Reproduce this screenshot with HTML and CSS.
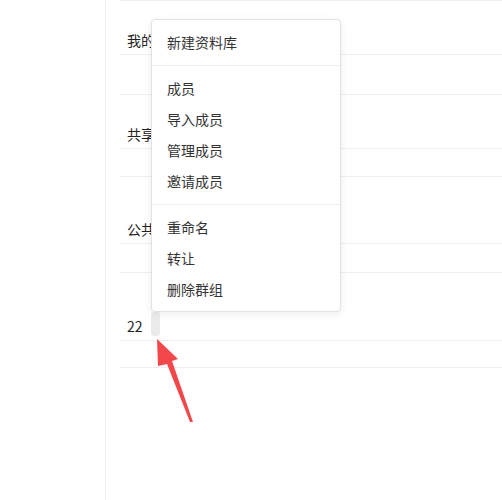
FILE: index.html
```html
<!DOCTYPE html>
<html lang="zh-CN">
<head>
    <meta charset="UTF-8">
    <title>资料库</title>
    <link rel="stylesheet" href="styles.css">
</head>
<body>
    <div class="layout">
        <div class="sidebar"></div>
        <div class="main">
            <div class="row group h54">我的资料库</div>
            <div class="row h40"></div>
            <div class="row group h54">共享资料库</div>
            <div class="row h28"></div>
            <div class="row group h67">公共资料库</div>
            <div class="row h29"></div>
            <div class="row group h68">
                <span>22</span>
                <span class="moreBtn"></span>
            </div>
            <div class="row h28 last"></div>
        </div>
    </div>

    <div class="menu">
        <div class="menuItem">新建资料库</div>
        <div class="menuDivider"></div>
        <div class="menuItem">成员</div>
        <div class="menuItem">导入成员</div>
        <div class="menuItem">管理成员</div>
        <div class="menuItem">邀请成员</div>
        <div class="menuDivider"></div>
        <div class="menuItem">重命名</div>
        <div class="menuItem">转让</div>
        <div class="menuItem">删除群组</div>
    </div>

    <svg class="arrow" width="502" height="500" viewBox="0 0 502 500">
        <polygon points="157,339 178,359 172,361 193,422 190,422 167,364 158,366" fill="#f4474a"/>
    </svg>
</body>
</html>
```

FILE: styles.css
```css
* {
    margin: 0;
    padding: 0;
    box-sizing: border-box;
}

body {
    font-family: "Noto Sans CJK SC", "Noto Sans", sans-serif;
    font-size: 14px;
    color: #222;
    background: #fff;
    width: 502px;
    height: 500px;
    overflow: hidden;
}

.layout {
    display: flex;
    height: 500px;
}

.sidebar {
    width: 106px;
    border-right: 1px solid #f0f0f0;
}

.main {
    flex: 1;
    padding-left: 14px;
}

.row {
    border-top: 1px solid #eeeeee;
    display: flex;
    align-items: flex-end;
    padding-left: 7px;
    padding-bottom: 4px;
    line-height: 20px;
}

.row.last {
    border-bottom: 1px solid #eeeeee;
}

.h54 { height: 54px; }
.h40 { height: 40px; }
.h28 { height: 28px; }
.h29 { height: 29px; }
.h67 { height: 67px; }
.h68 { height: 68px; }

.moreBtn {
    width: 9px;
    height: 24px;
    margin-left: 8px;
    background: #ebebeb;
    border-radius: 3px;
}

.menu {
    position: absolute;
    left: 151px;
    top: 19px;
    width: 190px;
    padding: 7px 0 6px;
    background: #fff;
    border: 1px solid #e2e2e6;
    border-radius: 4px;
    box-shadow: 0 2px 8px rgba(0, 0, 0, 0.08);
}

.menuItem {
    padding-left: 15px;
    line-height: 31px;
    color: #333;
}

.menuDivider {
    height: 1px;
    margin: 7px 0;
    background: #eceef2;
}

.arrow {
    position: absolute;
    left: 0;
    top: 0;
    pointer-events: none;
}
```
